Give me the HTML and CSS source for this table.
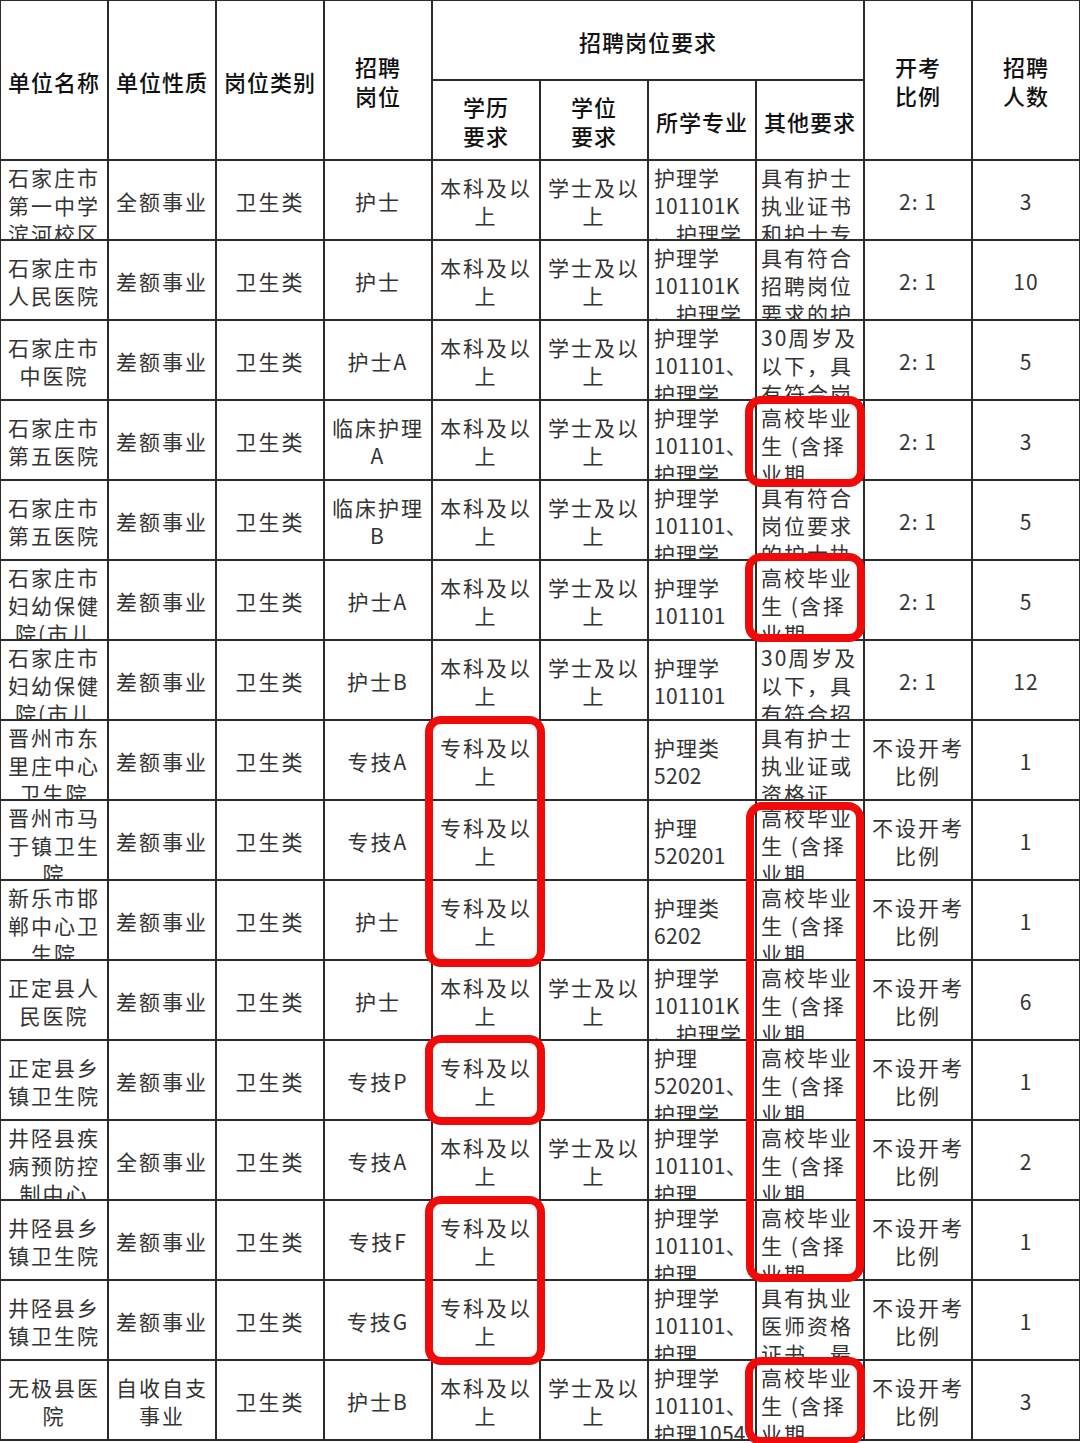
FILE: index.html
```html
<!DOCTYPE html>
<html lang="zh-CN">
<head>
<meta charset="utf-8">
<title>招聘岗位表</title>
<link rel="stylesheet" href="styles.css">
</head>
<body>
<div class="sheet">
  <div class="table">
    <div class="cell h r2"><div class="t">单位名称</div></div>
    <div class="cell h r2"><div class="t">单位性质</div></div>
    <div class="cell h r2"><div class="t">岗位类别</div></div>
    <div class="cell h r2"><div class="t">招聘<br>岗位</div></div>
    <div class="cell h c4"><div class="t">招聘岗位要求</div></div>
    <div class="cell h r2"><div class="t">开考<br>比例</div></div>
    <div class="cell h r2"><div class="t">招聘<br>人数</div></div>
    <div class="cell h sub"><div class="t">学历<br>要求</div></div>
    <div class="cell h sub"><div class="t">学位<br>要求</div></div>
    <div class="cell h sub"><div class="t">所学专业</div></div>
    <div class="cell h sub"><div class="t">其他要求</div></div>

    <!-- 1 -->
    <div class="cell"><div class="t">石家庄市第一中学滨河校区</div></div>
    <div class="cell"><div class="t">全额事业</div></div>
    <div class="cell"><div class="t">卫生类</div></div>
    <div class="cell"><div class="t">护士</div></div>
    <div class="cell"><div class="t">本科及以上</div></div>
    <div class="cell"><div class="t">学士及以上</div></div>
    <div class="cell major"><div class="t">护理学<br><span class="code">101101K</span><br>、护理学</div></div>
    <div class="cell other"><div class="t">具有护士<br>执业证书<br>和护士专</div></div>
    <div class="cell"><div class="t num">2: 1</div></div>
    <div class="cell"><div class="t num">3</div></div>
    <!-- 2 -->
    <div class="cell"><div class="t">石家庄市人民医院</div></div>
    <div class="cell"><div class="t">差额事业</div></div>
    <div class="cell"><div class="t">卫生类</div></div>
    <div class="cell"><div class="t">护士</div></div>
    <div class="cell"><div class="t">本科及以上</div></div>
    <div class="cell"><div class="t">学士及以上</div></div>
    <div class="cell major"><div class="t">护理学<br><span class="code">101101K</span><br>、护理学</div></div>
    <div class="cell other"><div class="t">具有符合<br>招聘岗位<br>要求的护</div></div>
    <div class="cell"><div class="t num">2: 1</div></div>
    <div class="cell"><div class="t num">10</div></div>
    <!-- 3 -->
    <div class="cell"><div class="t">石家庄市中医院</div></div>
    <div class="cell"><div class="t">差额事业</div></div>
    <div class="cell"><div class="t">卫生类</div></div>
    <div class="cell"><div class="t">护士A</div></div>
    <div class="cell"><div class="t">本科及以上</div></div>
    <div class="cell"><div class="t">学士及以上</div></div>
    <div class="cell major"><div class="t">护理学<br><span class="code">101101</span>、<br>护理学</div></div>
    <div class="cell other"><div class="t">30周岁及<br>以下，具<br>有符合岗</div></div>
    <div class="cell"><div class="t num">2: 1</div></div>
    <div class="cell"><div class="t num">5</div></div>
    <!-- 4 -->
    <div class="cell"><div class="t">石家庄市第五医院</div></div>
    <div class="cell"><div class="t">差额事业</div></div>
    <div class="cell"><div class="t">卫生类</div></div>
    <div class="cell"><div class="t">临床护理A</div></div>
    <div class="cell"><div class="t">本科及以上</div></div>
    <div class="cell"><div class="t">学士及以上</div></div>
    <div class="cell major"><div class="t">护理学<br><span class="code">101101</span>、<br>护理学</div></div>
    <div class="cell other"><div class="t">高校毕业<br>生 (含择<br>业期</div></div>
    <div class="cell"><div class="t num">2: 1</div></div>
    <div class="cell"><div class="t num">3</div></div>
    <!-- 5 -->
    <div class="cell"><div class="t">石家庄市第五医院</div></div>
    <div class="cell"><div class="t">差额事业</div></div>
    <div class="cell"><div class="t">卫生类</div></div>
    <div class="cell"><div class="t">临床护理B</div></div>
    <div class="cell"><div class="t">本科及以上</div></div>
    <div class="cell"><div class="t">学士及以上</div></div>
    <div class="cell major"><div class="t">护理学<br><span class="code">101101</span>、<br>护理学</div></div>
    <div class="cell other"><div class="t">具有符合<br>岗位要求<br>的护士执</div></div>
    <div class="cell"><div class="t num">2: 1</div></div>
    <div class="cell"><div class="t num">5</div></div>
    <!-- 6 -->
    <div class="cell"><div class="t">石家庄市妇幼保健院(市儿</div></div>
    <div class="cell"><div class="t">差额事业</div></div>
    <div class="cell"><div class="t">卫生类</div></div>
    <div class="cell"><div class="t">护士A</div></div>
    <div class="cell"><div class="t">本科及以上</div></div>
    <div class="cell"><div class="t">学士及以上</div></div>
    <div class="cell major"><div class="t">护理学<br><span class="code">101101</span></div></div>
    <div class="cell other"><div class="t">高校毕业<br>生 (含择<br>业期</div></div>
    <div class="cell"><div class="t num">2: 1</div></div>
    <div class="cell"><div class="t num">5</div></div>
    <!-- 7 -->
    <div class="cell"><div class="t">石家庄市妇幼保健院(市儿</div></div>
    <div class="cell"><div class="t">差额事业</div></div>
    <div class="cell"><div class="t">卫生类</div></div>
    <div class="cell"><div class="t">护士B</div></div>
    <div class="cell"><div class="t">本科及以上</div></div>
    <div class="cell"><div class="t">学士及以上</div></div>
    <div class="cell major"><div class="t">护理学<br><span class="code">101101</span></div></div>
    <div class="cell other"><div class="t">30周岁及<br>以下，具<br>有符合招</div></div>
    <div class="cell"><div class="t num">2: 1</div></div>
    <div class="cell"><div class="t num">12</div></div>
    <!-- 8 -->
    <div class="cell"><div class="t">晋州市东里庄中心卫生院</div></div>
    <div class="cell"><div class="t">差额事业</div></div>
    <div class="cell"><div class="t">卫生类</div></div>
    <div class="cell"><div class="t">专技A</div></div>
    <div class="cell"><div class="t">专科及以上</div></div>
    <div class="cell"><div class="t"></div></div>
    <div class="cell major"><div class="t">护理类<br><span class="code">5202</span></div></div>
    <div class="cell other"><div class="t">具有护士<br>执业证或<br>资格证</div></div>
    <div class="cell"><div class="t">不设开考比例</div></div>
    <div class="cell"><div class="t num">1</div></div>
    <!-- 9 -->
    <div class="cell"><div class="t">晋州市马于镇卫生院</div></div>
    <div class="cell"><div class="t">差额事业</div></div>
    <div class="cell"><div class="t">卫生类</div></div>
    <div class="cell"><div class="t">专技A</div></div>
    <div class="cell"><div class="t">专科及以上</div></div>
    <div class="cell"><div class="t"></div></div>
    <div class="cell major"><div class="t">护理<br><span class="code">520201</span></div></div>
    <div class="cell other"><div class="t">高校毕业<br>生 (含择<br>业期</div></div>
    <div class="cell"><div class="t">不设开考比例</div></div>
    <div class="cell"><div class="t num">1</div></div>
    <!-- 10 -->
    <div class="cell"><div class="t">新乐市邯郸中心卫生院</div></div>
    <div class="cell"><div class="t">差额事业</div></div>
    <div class="cell"><div class="t">卫生类</div></div>
    <div class="cell"><div class="t">护士</div></div>
    <div class="cell"><div class="t">专科及以上</div></div>
    <div class="cell"><div class="t"></div></div>
    <div class="cell major"><div class="t">护理类<br><span class="code">6202</span></div></div>
    <div class="cell other"><div class="t">高校毕业<br>生 (含择<br>业期</div></div>
    <div class="cell"><div class="t">不设开考比例</div></div>
    <div class="cell"><div class="t num">1</div></div>
    <!-- 11 -->
    <div class="cell"><div class="t">正定县人民医院</div></div>
    <div class="cell"><div class="t">差额事业</div></div>
    <div class="cell"><div class="t">卫生类</div></div>
    <div class="cell"><div class="t">护士</div></div>
    <div class="cell"><div class="t">本科及以上</div></div>
    <div class="cell"><div class="t">学士及以上</div></div>
    <div class="cell major"><div class="t">护理学<br><span class="code">101101K</span><br>、护理学</div></div>
    <div class="cell other"><div class="t">高校毕业<br>生 (含择<br>业期</div></div>
    <div class="cell"><div class="t">不设开考比例</div></div>
    <div class="cell"><div class="t num">6</div></div>
    <!-- 12 -->
    <div class="cell"><div class="t">正定县乡镇卫生院</div></div>
    <div class="cell"><div class="t">差额事业</div></div>
    <div class="cell"><div class="t">卫生类</div></div>
    <div class="cell"><div class="t">专技P</div></div>
    <div class="cell"><div class="t">专科及以上</div></div>
    <div class="cell"><div class="t"></div></div>
    <div class="cell major"><div class="t">护理<br><span class="code">520201</span>、<br>护理学</div></div>
    <div class="cell other"><div class="t">高校毕业<br>生 (含择<br>业期</div></div>
    <div class="cell"><div class="t">不设开考比例</div></div>
    <div class="cell"><div class="t num">1</div></div>
    <!-- 13 -->
    <div class="cell"><div class="t">井陉县疾病预防控制中心</div></div>
    <div class="cell"><div class="t">全额事业</div></div>
    <div class="cell"><div class="t">卫生类</div></div>
    <div class="cell"><div class="t">专技A</div></div>
    <div class="cell"><div class="t">本科及以上</div></div>
    <div class="cell"><div class="t">学士及以上</div></div>
    <div class="cell major"><div class="t">护理学<br><span class="code">101101</span>、<br>护理</div></div>
    <div class="cell other"><div class="t">高校毕业<br>生 (含择<br>业期</div></div>
    <div class="cell"><div class="t">不设开考比例</div></div>
    <div class="cell"><div class="t num">2</div></div>
    <!-- 14 -->
    <div class="cell"><div class="t">井陉县乡镇卫生院</div></div>
    <div class="cell"><div class="t">差额事业</div></div>
    <div class="cell"><div class="t">卫生类</div></div>
    <div class="cell"><div class="t">专技F</div></div>
    <div class="cell"><div class="t">专科及以上</div></div>
    <div class="cell"><div class="t"></div></div>
    <div class="cell major"><div class="t">护理学<br><span class="code">101101</span>、<br>护理</div></div>
    <div class="cell other"><div class="t">高校毕业<br>生 (含择<br>业期</div></div>
    <div class="cell"><div class="t">不设开考比例</div></div>
    <div class="cell"><div class="t num">1</div></div>
    <!-- 15 -->
    <div class="cell"><div class="t">井陉县乡镇卫生院</div></div>
    <div class="cell"><div class="t">差额事业</div></div>
    <div class="cell"><div class="t">卫生类</div></div>
    <div class="cell"><div class="t">专技G</div></div>
    <div class="cell"><div class="t">专科及以上</div></div>
    <div class="cell"><div class="t"></div></div>
    <div class="cell major"><div class="t">护理学<br><span class="code">101101</span>、<br>护理</div></div>
    <div class="cell other"><div class="t">具有执业<br>医师资格<br>证书，最</div></div>
    <div class="cell"><div class="t">不设开考比例</div></div>
    <div class="cell"><div class="t num">1</div></div>
    <!-- 16 -->
    <div class="cell"><div class="t">无极县医院</div></div>
    <div class="cell"><div class="t">自收自支事业</div></div>
    <div class="cell"><div class="t">卫生类</div></div>
    <div class="cell"><div class="t">护士B</div></div>
    <div class="cell"><div class="t">本科及以上</div></div>
    <div class="cell"><div class="t">学士及以上</div></div>
    <div class="cell major"><div class="t">护理学<br><span class="code">101101</span>、<br>护理<span class="code">1054</span></div></div>
    <div class="cell other"><div class="t">高校毕业<br>生 (含择<br>业期</div></div>
    <div class="cell"><div class="t">不设开考比例</div></div>
    <div class="cell"><div class="t num">3</div></div>
  </div>

  <div class="mark mark-a"></div>
  <div class="mark mark-b"></div>
  <div class="mark mark-c"></div>
  <div class="mark mark-d"></div>
  <div class="mark mark-e"></div>
  <div class="mark mark-f"></div>
  <div class="mark mark-g"></div>
</div>
</body>
</html>
```

FILE: styles.css
```css
html, body {
  margin: 0;
  padding: 0;
  background: #ffffff;
}

body {
  font-family: "Noto Sans CJK SC", "Noto Sans", sans-serif;
}

.sheet {
  position: relative;
  width: 1080px;
  height: 1443px;
  overflow: hidden;
}

.table {
  display: grid;
  grid-template-columns: repeat(10, 1fr);
  grid-template-rows: repeat(18, 78px);
  gap: 2px;
  padding: 1px 1px 2px 1px;
  width: 1080px;
  box-sizing: border-box;
  background: #2b2b2b;
}

.cell {
  background: #ffffff;
  display: flex;
  flex-direction: column;
  overflow: hidden;
  padding: 2px 3px 0 3px;
  box-sizing: border-box;
  min-width: 0;
  min-height: 0;
}

.cell > .t {
  margin: auto 0;
  width: 100%;
  text-align: center;
  font-size: 21px;
  line-height: 28px;
  letter-spacing: 2px;
  color: #333333;
  font-weight: 400;
  white-space: normal;
}

.cell > .t.num {
  letter-spacing: 1px;
  white-space: pre;
}

.major > .t {
  text-align: left;
  letter-spacing: 1px;
  padding-left: 2px;
}

.major .code {
  letter-spacing: 0.3px;
}

.other > .t {
  text-align: left;
  letter-spacing: 2px;
  padding-left: 1px;
  white-space: pre;
}

.h > .t {
  font-size: 22px;
  line-height: 29px;
  letter-spacing: 1px;
  font-weight: 500;
  color: #111111;
}

.r2 {
  grid-row: span 2;
}

.c4 {
  grid-column: span 4;
}

.mark {
  position: absolute;
  box-sizing: border-box;
  border: 8px solid #f00a0a;
  border-radius: 16px;
}

.mark-a { left: 425px; top: 716px; width: 120px; height: 251px; }
.mark-b { left: 425px; top: 1035px; width: 120px; height: 90px; }
.mark-c { left: 425px; top: 1196px; width: 120px; height: 169px; }
.mark-d { left: 745px; top: 396px; width: 120px; height: 91px; }
.mark-e { left: 745px; top: 553px; width: 120px; height: 89px; }
.mark-f { left: 746px; top: 802px; width: 118px; height: 480px; }
.mark-g { left: 745px; top: 1357px; width: 120px; height: 88px; }
```
